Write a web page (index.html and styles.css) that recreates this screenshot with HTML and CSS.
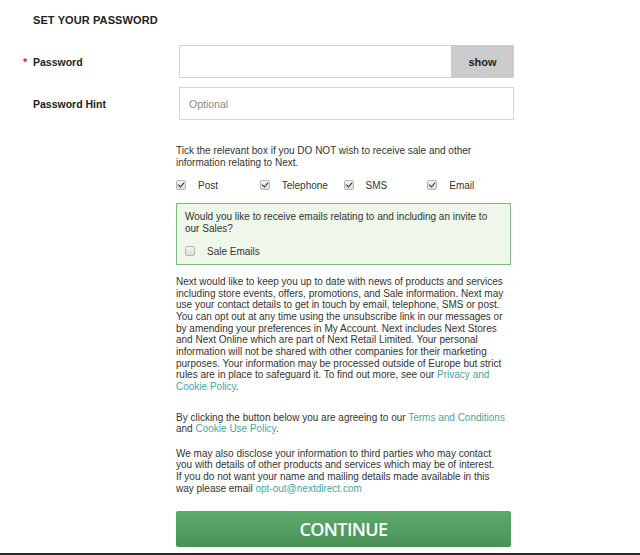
FILE: index.html
```html
<!DOCTYPE html>
<html>
<head>
<meta charset="utf-8">
<link rel="stylesheet" href="styles.css">
</head>
<body>
<div class="page">
  <h2 class="title">SET YOUR PASSWORD</h2>
  <div class="row row-pass">
    <label class="label"><span class="req">*</span>Password</label>
    <div class="pass-field">
      <input class="input pass-input" type="password">
      <button class="show-btn">show</button>
    </div>
  </div>
  <div class="row row-hint">
    <label class="label">Password Hint</label>
    <input class="input hint-input" type="text" placeholder="Optional">
  </div>
  <div class="content">
    <p class="text tick-text">Tick the relevant box if you DO NOT wish to receive sale and other information relating to Next.</p>
    <div class="checks">
      <label class="check"><span class="box checked"></span>Post</label>
      <label class="check"><span class="box checked"></span>Telephone</label>
      <label class="check"><span class="box checked"></span>SMS</label>
      <label class="check"><span class="box checked"></span>Email</label>
    </div>
    <div class="sale-box">
      <p class="text">Would you like to receive emails relating to and including an invite to our Sales?</p>
      <label class="check sale-check"><span class="box"></span>Sale Emails</label>
    </div>
    <p class="text para">Next would like to keep you up to date with news of products and services including store events, offers, promotions, and Sale information. Next may use your contact details to get in touch by email, telephone, SMS or post. You can opt out at any time using the unsubscribe link in our messages or by amending your preferences in My Account. Next includes Next Stores and Next Online which are part of Next Retail Limited. Your personal information will not be shared with other companies for their marketing purposes. Your information may be processed outside of Europe but strict rules are in place to safeguard it. To find out more, see our <a class="link" href="#">Privacy and Cookie Policy</a>.</p>
    <p class="text para2">By clicking the button below you are agreeing to our <a class="link" href="#">Terms and Conditions</a> and <a class="link" href="#">Cookie Use Policy</a>.</p>
    <p class="text para3">We may also disclose your information to third parties who may contact you with details of other products and services which may be of interest. If you do not want your name and mailing details made available in this way please email <a class="link" href="#">opt-out@nextdirect.com</a></p>
    <button class="continue">CONTINUE</button>
  </div>
</div>
<div class="bottom-line"></div>
</body>
</html>
```

FILE: styles.css
```css
html, body {
  margin: 0;
  padding: 0;
  background: #ffffff;
}
body {
  font-family: "Liberation Sans", Arial, sans-serif;
  color: #333;
  height: 555px;
  position: relative;
  overflow: hidden;
}
.page {
  padding-left: 33px;
  padding-top: 14px;
}
.title {
  margin: 0;
  font-size: 11px;
  font-weight: bold;
  letter-spacing: 0.1px;
  color: #222;
  line-height: 13px;
}
.row {
  display: flex;
  align-items: center;
}
.row-pass {
  margin-top: 18px;
}
.row-hint {
  margin-top: 9px;
}
.label {
  width: 146px;
  font-size: 10.5px;
  font-weight: bold;
  color: #222;
  position: relative;
}
.req {
  position: absolute;
  left: -10px;
  top: 0;
  color: #e0262b;
  font-size: 11px;
}
.pass-field {
  display: flex;
  width: 335px;
}
.input {
  box-sizing: border-box;
  height: 33px;
  border: 1px solid #d5d5d5;
  background: #fff;
  margin: 0;
  font-family: "Liberation Sans", Arial, sans-serif;
  font-size: 10.5px;
  padding: 0 9px;
  outline: none;
}
.pass-input {
  flex: 1;
  border-right: none;
}
.hint-input {
  width: 335px;
}
.hint-input::placeholder {
  color: #8a8a8a;
}
.show-btn {
  width: 63px;
  height: 33px;
  border: none;
  background: #cccccc;
  font-family: "Liberation Sans", Arial, sans-serif;
  font-weight: bold;
  font-size: 11px;
  color: #222;
  margin: 0;
  padding: 0;
}
.content {
  margin-left: 143px;
  width: 335px;
  padding-top: 25px;
}
.text {
  margin: 0;
  font-size: 10px;
  line-height: 11.67px;
  color: #333;
}
.tick-text {
  line-height: 12px;
}
.checks {
  display: flex;
  margin-top: 9px;
}
.check {
  display: flex;
  align-items: center;
  font-size: 10px;
  color: #333;
  width: 84px;
  height: 14px;
}
.box {
  box-sizing: border-box;
  width: 10px;
  height: 10px;
  border: 1px solid #b5b5b5;
  border-radius: 2px;
  background: linear-gradient(#f4f4f4, #dcdcdc);
  margin-right: 12px;
  position: relative;
  flex: none;
}
.box.checked::after {
  content: "";
  position: absolute;
  left: 2px;
  top: 0px;
  width: 3px;
  height: 5px;
  border: solid #333;
  border-width: 0 1.5px 1.5px 0;
  transform: rotate(40deg);
}
.sale-box {
  margin-top: 11px;
  box-sizing: border-box;
  width: 335px;
  border: 1px solid #7dbb7f;
  background: #eff7ea;
  padding: 7px 8px 6px 8px;
}
.sale-box .text {
  line-height: 12px;
}
.sale-check {
  margin-top: 9px;
  width: auto;
}
.para {
  margin-top: 11px;
}
.para2 {
  margin-top: 19px;
}
.para3 {
  margin-top: 12.7px;
  padding-right: 13px;
}
.link {
  color: #47a59f;
  text-decoration: none;
}
.continue {
  display: block;
  margin-top: 17px;
  width: 335px;
  height: 36px;
  border: none;
  border-radius: 2px;
  background: linear-gradient(#5cab6c, #4a9158);
  color: #fff;
  font-family: "Open Sans", "Liberation Sans", sans-serif;
  font-size: 18px;
  font-weight: 600;
  letter-spacing: -0.6px;
  padding: 0;
}
.bottom-line {
  position: absolute;
  left: 0;
  right: 0;
  bottom: 0;
  height: 2px;
  background: #2a2a2a;
}
```
